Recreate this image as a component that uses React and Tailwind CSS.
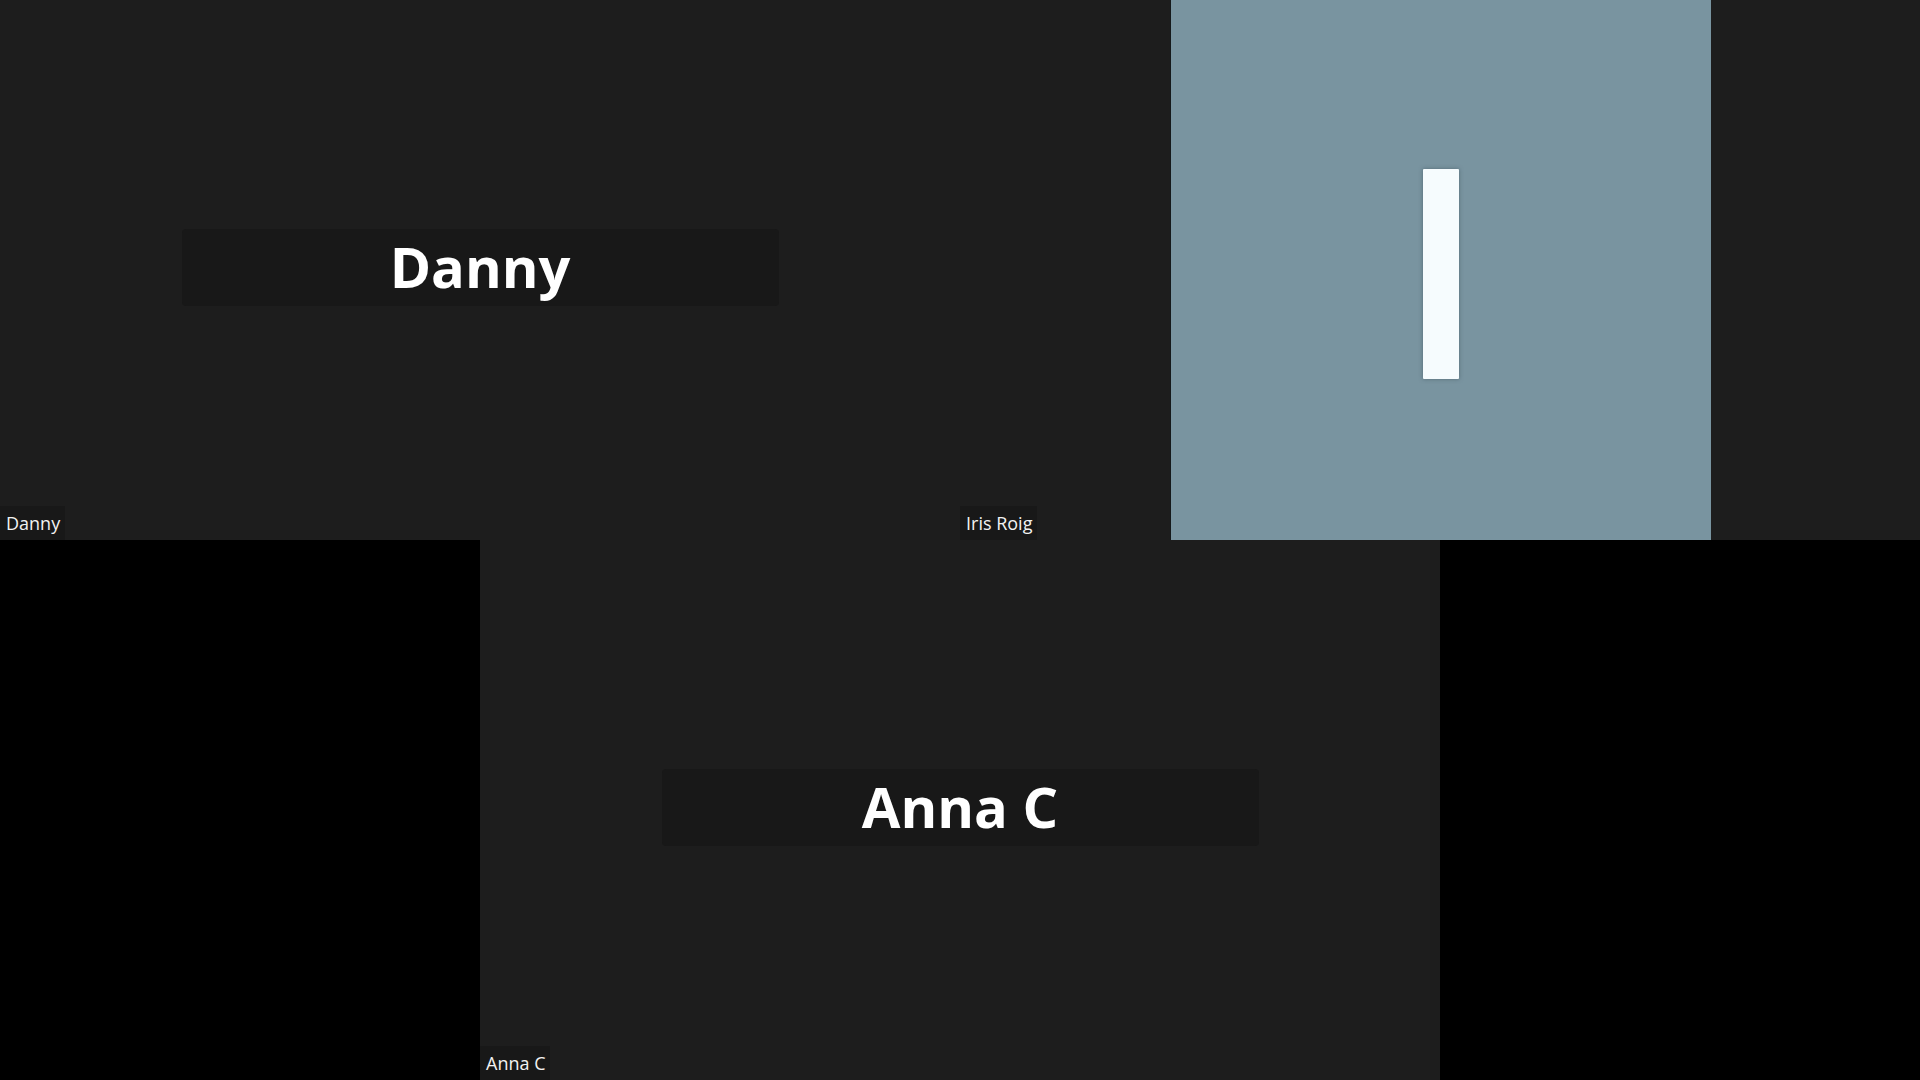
import React from "react";

const font = { fontFamily: '"Open Sans", "Noto Sans", "Liberation Sans", sans-serif' };

const NameTag = ({ name }) => (
  <div className="absolute left-0 bottom-0 h-[34px] flex items-center pl-[6px] pr-[5px] bg-[#181818] text-[18px] text-[#f2f2f2] leading-none">
    {name}
  </div>
);

const Plate = ({ name }) => (
  <div className="w-[597px] h-[77px] -mt-[5px] flex items-center justify-center bg-[#181818] rounded-[4px]">
    <span className="text-[56px] font-bold text-white leading-none -mt-[3px]">
      {name}
    </span>
  </div>
);

const Tile = ({ name, children }) => (
  <div className="relative w-[960px] h-[540px] bg-[#1d1d1d] flex items-center justify-center">
    {children}
    <NameTag name={name} />
  </div>
);

export default function App() {
  return (
    <div className="w-[1920px] h-[1080px] bg-black overflow-hidden flex flex-col" style={font}>
      {/* top row */}
      <div className="flex">
        <Tile name="Danny">
          <Plate name="Danny" />
        </Tile>
        <Tile name="Iris Roig">
          <div className="w-[541px] h-[540px] bg-[#7994a0] flex items-center justify-center border-l border-[#15191b]">
            <div className="w-[36px] h-[210px] bg-[#f6fcfe] mt-[8px] rounded-[1px] shadow-[0_0_4px_rgba(60,80,90,0.6)]" />
          </div>
        </Tile>
      </div>

      {/* bottom row */}
      <div className="flex justify-center">
        <Tile name="Anna C">
          <Plate name="Anna C" />
        </Tile>
      </div>
    </div>
  );
}
